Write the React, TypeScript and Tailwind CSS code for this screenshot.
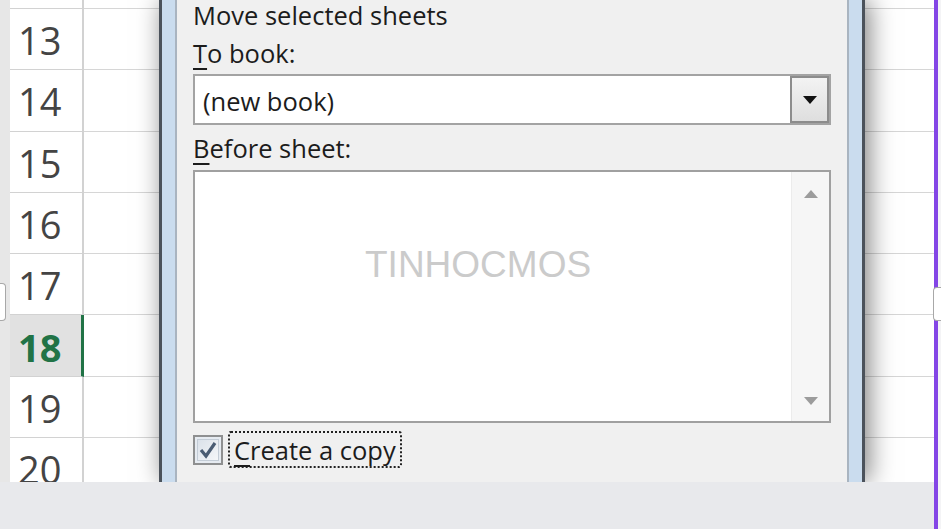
import React from "react";

const rows = [13, 14, 15, 16, 17, 18, 19, 20];

// --- Row header + cells to the left of the dialog ---
const LeftSheet: React.FC = () => (
  <div className="flex w-[159px] shrink-0">
    <div className="w-[10px] bg-[#e7e7e7]" />
    <div className="flex w-[74px] flex-col bg-white">
      <div className="h-[9px] shrink-0 border-b border-r-2 border-[#d2d2d2]" />
      {rows.map((n) => (
        <div
          key={n}
          className={`flex h-[61.3px] shrink-0 items-center border-b pl-[8px] pt-[2px] text-[38px] leading-[56px] ${
            n === 18
              ? "border-r-[3px] border-b-[#d2d2d2] border-r-[#217346] bg-[#e1e1e1] font-bold text-[#217346]"
              : "border-r-2 border-[#d2d2d2] text-[#444]"
          }`}
          style={{ fontFamily: '"Open Sans", sans-serif' }}
        >
          {n}
        </div>
      ))}
    </div>
    <div className="flex flex-1 flex-col bg-white">
      <div className="h-[9px] shrink-0 border-b border-[#d6d6d6]" />
      {rows.map((n) => (
        <div key={n} className="h-[61.3px] shrink-0 border-b border-[#d6d6d6]" />
      ))}
    </div>
  </div>
);

// --- Cells to the right of the dialog ---
const RightSheet: React.FC = () => (
  <div className="flex w-[69px] shrink-0 flex-col bg-white">
    <div className="h-[9px] shrink-0 border-b border-[#d6d6d6]" />
    {rows.map((n) => (
      <div key={n} className="h-[61.3px] shrink-0 border-b border-[#d6d6d6]" />
    ))}
  </div>
);

const Tri: React.FC<{ up?: boolean; color: string; w?: number }> = ({ up, color, w = 14 }) => (
  <svg width={w} height={w / 2 + 1} viewBox="0 0 14 8">
    <path d={up ? "M0 8 L7 0 L14 8 Z" : "M0 0 L14 0 L7 8 Z"} fill={color} />
  </svg>
);

// --- Move or Copy dialog ---
const Dialog: React.FC = () => (
  <div className="relative z-10 flex w-[706px] shrink-0 border-x-[3px] border-[#4b525b] bg-[#cadcee] px-[13px] shadow-[4px_0_24px_rgba(0,0,0,0.5)]">
    <div
      className="flex flex-1 flex-col border-x-2 border-[#a9b4c0] bg-[#f0f0f0] px-[16px] text-[25.5px] leading-[30px] text-[#1c1c1c]"
      style={{ fontFamily: '"Open Sans", sans-serif' }}
    >
      <div>Move selected sheets</div>
      <div className="mt-[8px]">
        <span className="underline decoration-2 underline-offset-[5px]">T</span>o book:
      </div>

      {/* --- To book combobox --- */}
      <div className="mt-[6px] flex h-[51px] border-2 border-[#a3a3a3] bg-white">
        <div className="flex flex-1 items-center pl-[8px] pt-[2px]">(new book)</div>
        <div className="flex w-[39px] items-center justify-center border-2 border-[#8c8c8c] bg-linear-to-b from-[#f3f3f3] to-[#dedede]">
          <Tri color="#111" />
        </div>
      </div>

      <div className="mt-[8px]">
        <span className="underline decoration-2 underline-offset-[5px]">B</span>efore sheet:
      </div>

      {/* --- Before sheet listbox --- */}
      <div className="mt-[7px] flex h-[253px] border-2 border-[#a0a0a0] bg-white">
        <div className="flex-1" />
        <div className="flex w-[38px] flex-col items-center justify-between border-l border-[#ececec] bg-[#f6f6f6] pb-[16px] pt-[18px]">
          <Tri up color="#9c9c9c" />
          <Tri color="#9c9c9c" />
        </div>
      </div>

      {/* --- Create a copy --- */}
      <div className="mt-[8px] flex items-center gap-[5px]">
        <div className="flex h-[30px] w-[30px] items-center justify-center border-2 border-[#8e8f90] bg-[#e6ebf1] p-[2px]">
          <div className="flex h-full w-full items-center justify-center border border-[#c3ccd6] bg-linear-to-br from-[#dbe2ea] to-[#f4f6f8]">
            <svg width="20" height="20" viewBox="0 0 20 20">
              <path d="M3 10 L8 16 L17 3" fill="none" stroke="#4a5c73" strokeWidth="3.2" />
            </svg>
          </div>
        </div>
        <div className="flex h-[37px] items-center rounded-[3px] border-2 border-dotted border-[#222] px-[4px]">
          <span>
            <span className="underline decoration-2 underline-offset-[5px]">C</span>reate a copy
          </span>
        </div>
      </div>
    </div>
  </div>
);

const App: React.FC = () => (
  <div className="relative flex h-[529px] w-[941px] overflow-hidden bg-white">
    <div className="flex w-[934px] flex-col">
      <div className="flex h-[482px] overflow-hidden">
        <LeftSheet />
        <Dialog />
        <RightSheet />
      </div>
      <div className="flex-1 bg-[#e8e9ec]" />
    </div>
    <div className="w-[4px] bg-[#8446e6]" />
    <div className="flex-1 bg-[#f4f4f6]" />

    {/* --- Watermark --- */}
    <div
      className="pointer-events-none absolute left-[365px] top-[246px] z-20 text-[37px] leading-none text-[#cbcbcb]"
      style={{ fontFamily: '"Liberation Sans", Arial, sans-serif' }}
    >
      TINHOCMOS
    </div>

    {/* --- Edge handles --- */}
    <div className="absolute left-0 top-[283px] z-20 h-[38px] w-[6px] rounded-r-[4px] border border-l-0 border-[#a8a8a8] bg-white" />
    <div className="absolute right-0 top-[287px] z-20 h-[34px] w-[8px] rounded-l-[4px] border border-r-0 border-[#a8a8a8] bg-white" />
  </div>
);

export default App;
